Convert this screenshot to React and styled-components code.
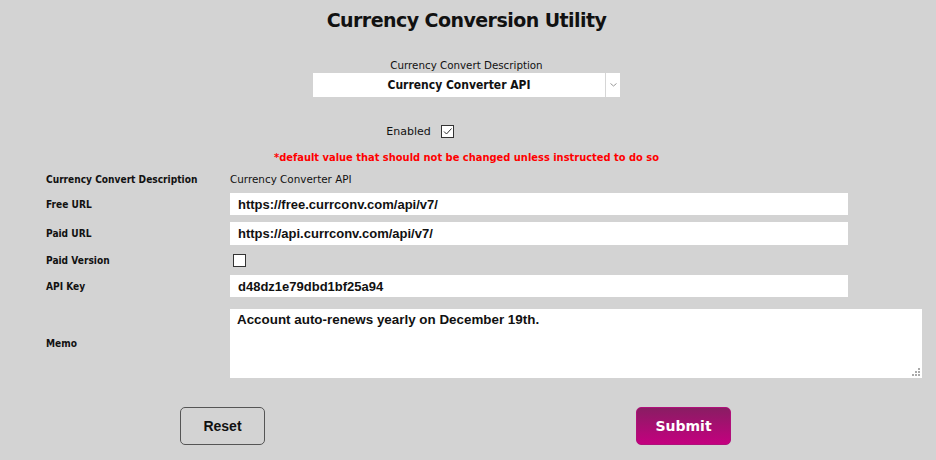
import React from "react";
import styled, { createGlobalStyle } from "styled-components";

const GlobalStyle = createGlobalStyle`
  html, body {
    margin: 0;
    padding: 0;
    background: #d3d3d3;
  }
  body {
    font-family: "DejaVu Sans", "Noto Sans", sans-serif;
    color: #111;
  }
`;

const condensed = `"DejaVu Sans Condensed", "DejaVu Sans", sans-serif`;

const Page = styled.div`
  width: 936px;
  height: 460px;
  box-sizing: border-box;
  padding-right: 3px;
  display: flex;
  flex-direction: column;
  align-items: center;
  overflow: hidden;
`;

const Title = styled.h1`
  margin: 8px 0 0;
  font-size: 19px;
  line-height: 24px;
  font-weight: bold;
  letter-spacing: -0.55px;
`;

const SelectGroup = styled.div`
  margin-top: 27px;
  display: flex;
  flex-direction: column;
  align-items: center;
  gap: 1px;
`;

const SmallLabel = styled.span`
  font-size: 10.3px;
  line-height: 13px;
`;

const SelectBox = styled.div`
  width: 307px;
  height: 24px;
  background: #fff;
  display: flex;
`;

const SelectValue = styled.div`
  flex: 1;
  display: flex;
  align-items: center;
  justify-content: center;
  font-family: ${condensed};
  font-size: 12px;
  font-weight: bold;
`;

const SelectArrow = styled.div`
  width: 14px;
  border-left: 1px solid #d6d6d6;
  display: flex;
  align-items: center;
  justify-content: center;
`;

const EnabledRow = styled.label`
  margin: 28px 93px 0 0;
  display: flex;
  align-items: center;
  gap: 10px;
  font-size: 11px;
`;

const Check = styled.span`
  width: 13px;
  height: 13px;
  box-sizing: border-box;
  border: 1px solid #333;
  background: #fff;
  display: inline-flex;
  align-items: center;
  justify-content: center;
`;

const Notice = styled.p`
  margin: 13px 0 0;
  color: #ff0000;
  font-family: ${condensed};
  font-size: 11px;
  line-height: 14px;
  font-weight: bold;
`;

const Form = styled.div`
  align-self: stretch;
  margin: 8px 0 0 46px;
  display: grid;
  grid-template-columns: 184px 1fr;
  row-gap: 7px;
  align-items: center;
`;

const FieldLabel = styled.span`
  font-family: ${condensed};
  font-size: 10.1px;
  line-height: 13px;
  font-weight: bold;
  margin-top: ${(p) => p.$mt || 0}px;
`;

const FieldValue = styled.span`
  font-size: 10.4px;
  line-height: 13px;
`;

const TextInput = styled.div`
  width: 618px;
  height: ${(p) => p.$h || 22}px;
  box-sizing: border-box;
  background: #fff;
  padding: 0 8px;
  display: flex;
  align-items: center;
  font-family: "Liberation Sans", Arial, sans-serif;
  font-size: 13px;
  font-weight: bold;
  color: #111;
`;

const CheckCell = styled.div`
  height: 15px;
  display: flex;
  align-items: center;
  padding-left: 3px;
  margin-top: 1px;
`;

const Memo = styled.div`
  position: relative;
  width: 692px;
  height: 69px;
  box-sizing: border-box;
  background: #fff;
  padding: 3px 7px;
  margin-top: 5px;
  font-family: "Liberation Sans", Arial, sans-serif;
  font-size: 13.4px;
  font-weight: bold;
  color: #111;
`;

const Grip = styled.svg`
  position: absolute;
  right: 2px;
  bottom: 2px;
`;

const Buttons = styled.div`
  align-self: stretch;
  margin-top: 29px;
  display: flex;
  padding-left: 180px;
  gap: 371px;
`;

const Button = styled.button`
  width: ${(p) => p.$w}px;
  height: 38px;
  border-radius: 5px;
  font-family: ${(p) =>
    p.$primary ? '"DejaVu Sans", sans-serif' : '"Liberation Sans", Arial, sans-serif'};
  font-size: 14px;
  font-weight: bold;
  cursor: pointer;
  color: ${(p) => (p.$primary ? "#fff" : "#111")};
  border: 1px solid ${(p) => (p.$primary ? "#b0107a" : "#555")};
  background: ${(p) =>
    p.$primary ? "linear-gradient(#891d63, #c4007f)" : "#d3d3d3"};
`;

const rows = [
  { label: "Free URL", value: "https://free.currconv.com/api/v7/" },
  { label: "Paid URL", value: "https://api.currconv.com/api/v7/", h: 23 },
];

export default function App() {
  return (
    <>
      <GlobalStyle />
      <Page>
        <Title>Currency Conversion Utility</Title>

        <SelectGroup>
          <SmallLabel>Currency Convert Description</SmallLabel>
          <SelectBox>
            <SelectValue>Currency Converter API</SelectValue>
            <SelectArrow>
              <svg width="7" height="4" viewBox="0 0 7 4">
                <path d="M0.5 0.5 L3.5 3 L6.5 0.5" fill="none" stroke="#999" strokeWidth="1" />
              </svg>
            </SelectArrow>
          </SelectBox>
        </SelectGroup>

        <EnabledRow>
          Enabled
          <Check>
            <svg width="11" height="11" viewBox="0 0 11 11">
              <path d="M2 5.5 L4.5 8 L9.5 2.5" fill="none" stroke="#333" strokeWidth="1" />
            </svg>
          </Check>
        </EnabledRow>

        <Notice>*default value that should not be changed unless instructed to do so</Notice>

        <Form>
          <FieldLabel>Currency Convert Description</FieldLabel>
          <FieldValue>Currency Converter API</FieldValue>

          {rows.map((r) => (
            <React.Fragment key={r.label}>
              <FieldLabel>{r.label}</FieldLabel>
              <TextInput $h={r.h}>{r.value}</TextInput>
            </React.Fragment>
          ))}

          <FieldLabel>Paid Version</FieldLabel>
          <CheckCell>
            <Check />
          </CheckCell>

          <FieldLabel>API Key</FieldLabel>
          <TextInput>d48dz1e79dbd1bf25a94</TextInput>

          <FieldLabel $mt={5}>Memo</FieldLabel>
          <Memo>
            Account auto-renews yearly on December 19th.
            <Grip width="8" height="8" viewBox="0 0 8 8">
              <rect x="6" y="0" width="2" height="2" fill="#aaa" />
              <rect x="3" y="3" width="2" height="2" fill="#aaa" />
              <rect x="6" y="3" width="2" height="2" fill="#aaa" />
              <rect x="0" y="6" width="2" height="2" fill="#aaa" />
              <rect x="3" y="6" width="2" height="2" fill="#aaa" />
              <rect x="6" y="6" width="2" height="2" fill="#aaa" />
            </Grip>
          </Memo>
        </Form>

        <Buttons>
          <Button $w={85}>Reset</Button>
          <Button $w={95} $primary>
            Submit
          </Button>
        </Buttons>
      </Page>
    </>
  );
}
